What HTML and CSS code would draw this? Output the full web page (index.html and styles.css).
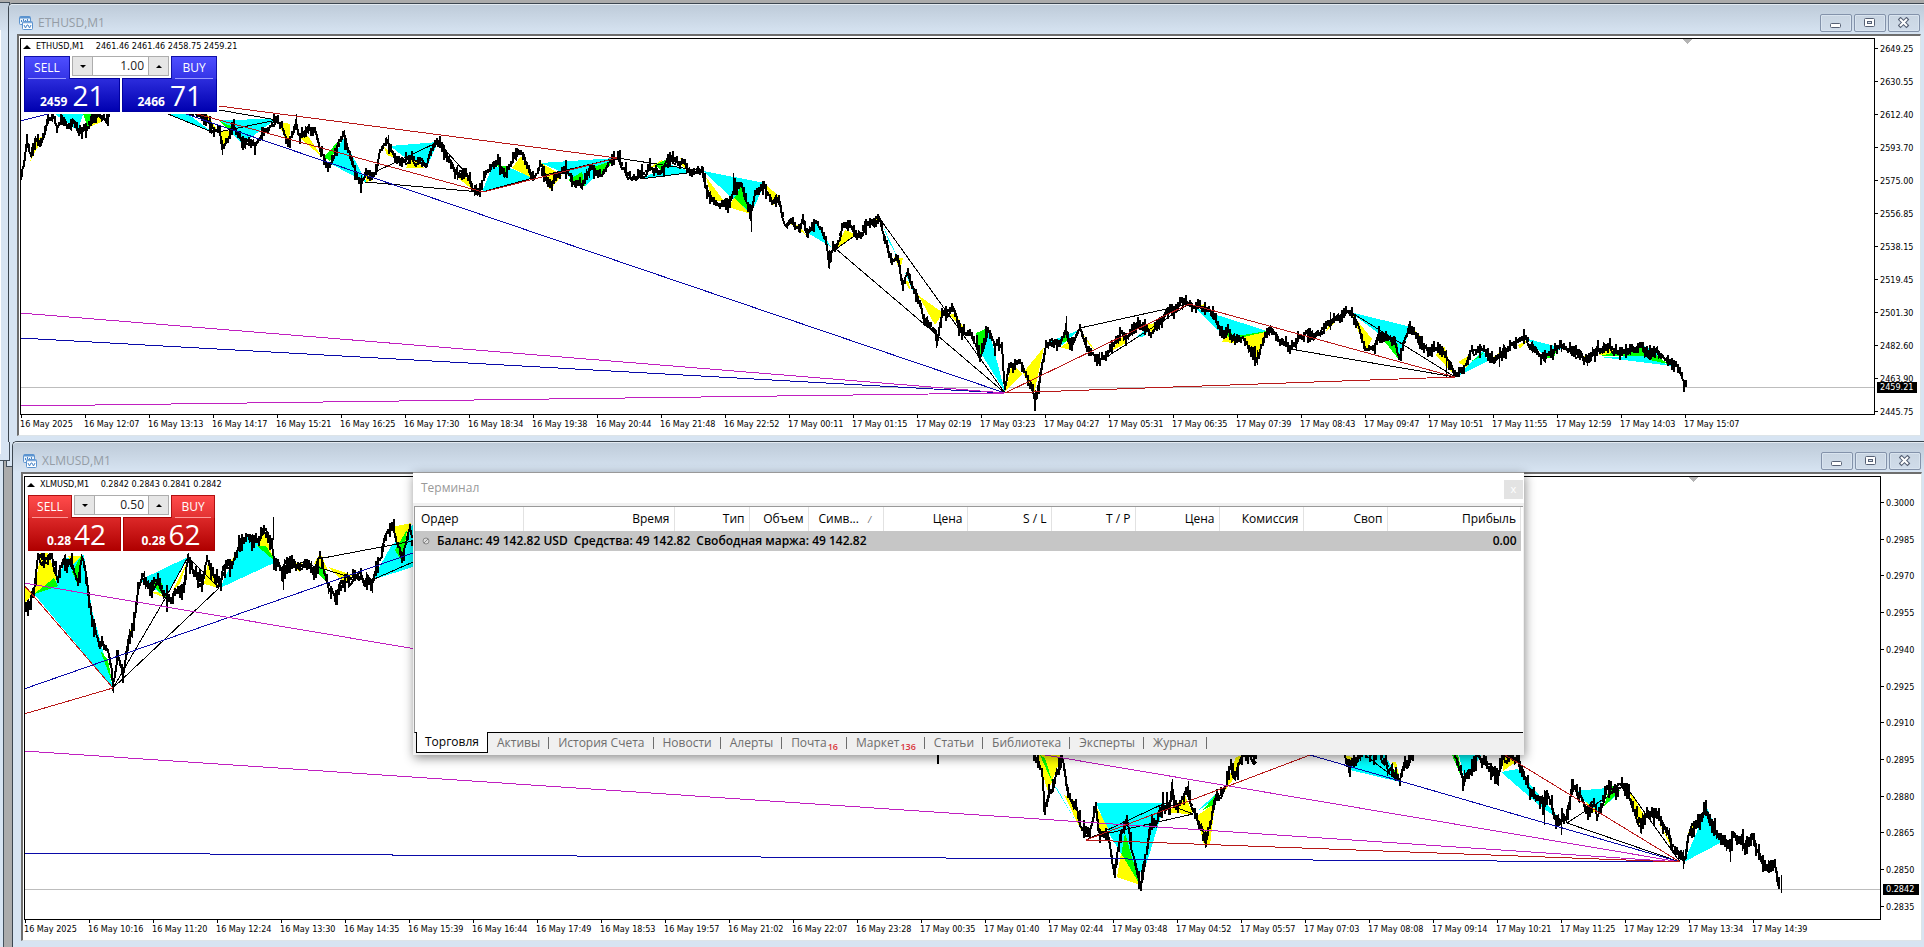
FILE: index.html
```
<!DOCTYPE html>
<html lang="ru">
<head>
<meta charset="utf-8">
<title>Терминал</title>
<link rel="stylesheet" href="styles.css">
</head>
<body>
<svg class="defs" aria-hidden="true">
  <symbol id="i-chart" viewBox="0 0 14 14">
    <rect x="0.5" y="0.5" width="11" height="8" rx="1" fill="#eaf3fc" stroke="#5b93cf"/>
    <path d="M1 1.5h10" stroke="#5b93cf" stroke-width="2"/>
    <path d="M2.500 6V4M4.500 5V3M6.500 6V4M8.500 5V3" stroke="#4a86c8"/>
    <rect x="3.500" y="5.500" width="10" height="8" rx="1" fill="#fff" stroke="#5b93cf"/>
    <path d="M4 6.500h9" stroke="#7eaadb" stroke-width="1.500"/>
    <path d="M5 9l1.500 3L8 9l1 0 1.500 3L12 9" fill="none" stroke="#4a86c8"/>
  </symbol>
  <symbol id="i-min" viewBox="0 0 12 12"><rect x="0.500" y="6.500" width="10" height="4" rx="1" fill="#fff" stroke="#566074"/></symbol>
  <symbol id="i-max" viewBox="0 0 12 12"><rect x="0.500" y="1.500" width="10" height="8" rx="1" fill="#fff" stroke="#566074"/><rect x="3.500" y="4.500" width="4" height="2" fill="#d5dfeb" stroke="#566074"/></symbol>
  <symbol id="i-close" viewBox="0 0 12 12"><path d="M2.500 2.500l6 6M8.500 2.500l-6 6" stroke="#566074" stroke-width="4" stroke-linecap="square"/><path d="M2 2l7 7M9 2l-7 7" stroke="#fff" stroke-width="2"/></symbol>
</svg>
<main class="desktop">
  <div class="back-low"></div>
  <div class="back-mid"></div>
  <div class="back-top"></div>

  <section class="window window-eth">
    <header class="titlebar">
      <svg class="app-icon"><use href="#i-chart"/></svg>
      <h2>ETHUSD,M1</h2>
      <div class="controls">
        <button aria-label="Свернуть"><svg><use href="#i-min"/></svg></button>
        <button aria-label="Развернуть"><svg><use href="#i-max"/></svg></button>
        <button aria-label="Закрыть"><svg><use href="#i-close"/></svg></button>
      </div>
    </header>
    <div class="client">
      <div class="plot">
        <svg class="chart" id="eth" viewBox="21 39 1853 375" preserveAspectRatio="none"></svg>
        <div class="overlay">
          <p class="quote"><span class="tri"></span><span class="sym">ETHUSD,M1</span> 2461.46 2461.46 2458.75 2459.21</p>
          <div class="trade blue">
            <div class="trade-top">
              <button class="side">SELL</button>
              <div class="lot"><button class="down" aria-label="Меньше"></button><input value="1.00" aria-label="Объем ETHUSD"><button class="up" aria-label="Больше"></button></div>
              <button class="side">BUY</button>
            </div>
            <div class="trade-bottom">
              <div class="price sell"><b>2459</b><span>21</span></div>
              <div class="price buy"><b>2466</b><span>71</span></div>
            </div>
          </div>
        </div>
      </div>
      <div class="axis">
        <span>2649.25</span><span>2630.55</span><span>2612.40</span><span>2593.70</span><span>2575.00</span><span>2556.85</span><span>2538.15</span><span>2519.45</span><span>2501.30</span><span>2482.60</span><span>2463.90</span><span>2445.75</span>
        <strong>2459.21</strong>
      </div>
      <div class="times">
        <span>16 May 2025</span><span>16 May 12:07</span><span>16 May 13:13</span><span>16 May 14:17</span><span>16 May 15:21</span><span>16 May 16:25</span><span>16 May 17:30</span><span>16 May 18:34</span><span>16 May 19:38</span><span>16 May 20:44</span><span>16 May 21:48</span><span>16 May 22:52</span><span>17 May 00:11</span><span>17 May 01:15</span><span>17 May 02:19</span><span>17 May 03:23</span><span>17 May 04:27</span><span>17 May 05:31</span><span>17 May 06:35</span><span>17 May 07:39</span><span>17 May 08:43</span><span>17 May 09:47</span><span>17 May 10:51</span><span>17 May 11:55</span><span>17 May 12:59</span><span>17 May 14:03</span><span>17 May 15:07</span>
      </div>
    </div>
  </section>

  <section class="window window-xlm">
    <header class="titlebar">
      <svg class="app-icon"><use href="#i-chart"/></svg>
      <h2>XLMUSD,M1</h2>
      <div class="controls">
        <button aria-label="Свернуть"><svg><use href="#i-min"/></svg></button>
        <button aria-label="Развернуть"><svg><use href="#i-max"/></svg></button>
        <button aria-label="Закрыть"><svg><use href="#i-close"/></svg></button>
      </div>
    </header>
    <div class="client">
      <div class="plot">
        <svg class="chart" id="xlm" viewBox="25 477 1855 442" preserveAspectRatio="none"></svg>
        <div class="overlay">
          <p class="quote"><span class="tri"></span><span class="sym">XLMUSD,M1</span> 0.2842 0.2843 0.2841 0.2842</p>
          <div class="trade red">
            <div class="trade-top">
              <button class="side">SELL</button>
              <div class="lot"><button class="down" aria-label="Меньше"></button><input value="0.50" aria-label="Объем XLMUSD"><button class="up" aria-label="Больше"></button></div>
              <button class="side">BUY</button>
            </div>
            <div class="trade-bottom">
              <div class="price sell"><b>0.28</b><span>42</span></div>
              <div class="price buy"><b>0.28</b><span>62</span></div>
            </div>
          </div>
        </div>
      </div>
      <div class="axis">
        <span>0.3000</span><span>0.2985</span><span>0.2970</span><span>0.2955</span><span>0.2940</span><span>0.2925</span><span>0.2910</span><span>0.2895</span><span>0.2880</span><span>0.2865</span><span>0.2850</span><span>0.2835</span>
        <strong>0.2842</strong>
      </div>
      <div class="times">
        <span>16 May 2025</span><span>16 May 10:16</span><span>16 May 11:20</span><span>16 May 12:24</span><span>16 May 13:30</span><span>16 May 14:35</span><span>16 May 15:39</span><span>16 May 16:44</span><span>16 May 17:49</span><span>16 May 18:53</span><span>16 May 19:57</span><span>16 May 21:02</span><span>16 May 22:07</span><span>16 May 23:28</span><span>17 May 00:35</span><span>17 May 01:40</span><span>17 May 02:44</span><span>17 May 03:48</span><span>17 May 04:52</span><span>17 May 05:57</span><span>17 May 07:03</span><span>17 May 08:08</span><span>17 May 09:14</span><span>17 May 10:21</span><span>17 May 11:25</span><span>17 May 12:29</span><span>17 May 13:34</span><span>17 May 14:39</span>
      </div>
    </div>
  </section>

  <section class="terminal">
    <header class="terminal-title">
      <h2>Терминал</h2>
      <button aria-label="Закрыть">x</button>
    </header>
    <div class="terminal-body">
      <table>
        <colgroup><col class="w108"><col class="w151"><col class="w76"><col class="w59"><col class="w76"><col class="w84"><col class="w84"><col class="w84"><col class="w84"><col class="w84"><col class="w84"><col></colgroup>
        <thead>
          <tr><th class="left">Ордер</th><th>Время</th><th>Тип</th><th>Объем</th><th class="left sorted">Симв... <i>/</i></th><th>Цена</th><th>S / L</th><th>T / P</th><th>Цена</th><th>Комиссия</th><th>Своп</th><th>Прибыль</th></tr>
        </thead>
        <tbody>
          <tr><td colspan="11"><div class="balance"><svg viewBox="0 0 8 8"><circle cx="4" cy="4" r="3" fill="#ddd" stroke="#888"/><path d="M2 6l4-4" stroke="#888"/></svg><span>Баланс: 49 142.82 USD</span><span>Средства: 49 142.82</span><span>Свободная маржа: 49 142.82</span></div></td><td class="profit">0.00</td></tr>
        </tbody>
      </table>
    </div>
    <nav class="tabs">
      <button class="active">Торговля</button><button>Активы</button><button>История Счета</button><button>Новости</button><button>Алерты</button><button>Почта<sub>16</sub></button><button>Маркет<sub>136</sub></button><button>Статьи</button><button>Библиотека</button><button>Эксперты</button><button>Журнал</button>
    </nav>
  </section>
</main>
<script src="charts.js"></script>
</body>
</html>
```
FILE: styles.css
```
* { box-sizing: border-box; }
body { margin: 0; font: 12px/16px "Open Sans", "Noto Sans", sans-serif; color: #000; }
h2, p { margin: 0; font-weight: normal; font-size: 12px; }
button, input { font: inherit; padding: 0; margin: 0; }
.defs { position: absolute; width: 0; height: 0; }
.desktop { position: relative; min-height: 100vh; overflow: hidden; background: #ababab; }

.back-low { position: absolute; left: 0; top: 440px; bottom: 0; width: 4px; background: #d7e4f2; border-right: 1px solid #44505c; }
.back-mid { position: absolute; left: 6px; top: 440px; height: 27px; width: 8px; background: #d7e4f2; border: 1px solid #44505c; border-top-color: #d7e4f2; }
.back-top { position: absolute; left: 0; top: 2px; height: 459px; width: 10px; background: linear-gradient(#c0ccd9, #d7e4f2 30px); border: 1px solid #44505c; border-left: 0; }
.back-top::before { content: ""; display: block; width: 1px; height: 424px; margin-top: 27px; background: #fff; }

.window { position: absolute; right: 0; display: flex; flex-direction: column; background: #d7e4f2; border-top: 1px solid #3c4650; border-left: 1px solid #3c4650; border-top-left-radius: 5px; padding: 0 3px 6px 8px; }
.window-eth { left: 8px; top: 3px; }
.window-xlm { left: 12px; top: 441px; padding-right: 2px; }
.titlebar { display: flex; align-items: center; height: 30px; margin: 0 -3px 0 -8px; padding: 7px 4px 0 10px; background: linear-gradient(#becbd9, #d7e4f2); border-top: 1px solid #e4ebf2; border-top-left-radius: 4px; }
.titlebar h2 { flex: 1; margin-left: 5px; color: #949ca5; }
.app-icon { width: 14px; height: 14px; }
.controls { display: flex; gap: 2px; }
.controls button { display: grid; place-items: center; width: 32px; height: 18px; border: 1px solid #8392aa; border-radius: 2px; background: linear-gradient(#c9d5e2, #d0dcea); box-shadow: inset 0 0 0 1px #d9e4ef; }
.controls svg { width: 12px; height: 12px; }

.client { display: grid; grid-template-columns: 1fr 45px; background: #fff; border: solid #6e6e6e; border-width: 2px 1px 1px 2px; border-right-color: #dde4e8; border-bottom-color: #dde4e8; padding: 2px 0 0 1px; font: 9px/12px "DejaVu Sans Condensed", "DejaVu Sans", "Noto Sans", sans-serif; }
.window-xlm .client { grid-template-columns: 1fr 40px; }
.plot { position: relative; border: 1px solid #000; height: 377px; overflow: hidden; }
.window-xlm .plot { height: 444px; }
.chart { display: block; width: 100%; height: 100%; }
.overlay { position: absolute; left: 2px; top: 1px; }
.quote { display: flex; align-items: center; font-size: 9px; line-height: 13px; white-space: pre; gap: 5px; }
.sym { margin-right: 4px; }
.tri { border: 4px solid transparent; border-top: 0; border-bottom: 4px solid #000; }

.axis { position: relative; display: flex; flex-direction: column; justify-content: space-between; height: 380px; padding: 5px 0 0; margin-bottom: -3px; }
.window-xlm .axis { height: 444px; margin-bottom: 0; padding: 21px 0 7px; }
.axis span::before { content: ""; display: inline-block; width: 3px; height: 1px; margin-right: 2px; vertical-align: 3px; background: #000; }
.axis strong { position: absolute; left: 2px; right: 3px; top: 344px; padding-left: 3px; line-height: 11px; font-weight: normal; color: #fff; background: #000; }
.window-xlm .axis strong { top: 408px; right: 2px; }
.times { grid-column: 1 / -1; display: flex; height: 20px; }
.times span { position: relative; flex: 0 0 64px; padding-top: 3px; white-space: nowrap; }
.times span::before { content: ""; position: absolute; left: 1px; top: 0; width: 1px; height: 3px; background: #000; }

.trade { width: 195px; background: #fff; padding: 2px 2px 2px 0; margin-top: 1px; margin-left: 1px; font: 12px/16px "Open Sans", "Noto Sans", sans-serif; }
.red { width: 189px; margin-top: 2px; }
.trade-top { display: flex; gap: 2px; }
.side { flex: none; position: relative; z-index: 1; width: 46px; height: 23px; margin-bottom: -1px; line-height: 20px; color: #fff; border: 1px solid; border-bottom: 0; }
.red .side { width: 44px; }
.lot { flex: 1; min-width: 0; display: flex; height: 20px; border: 1px solid #adadad; }
.lot input { flex: 1; min-width: 0; border: 0; border-left: 1px solid #adadad; border-right: 1px solid #adadad; text-align: right; padding-right: 4px; color: #222; outline: 0; }
.lot button { flex: none; display: grid; place-items: center; width: 19px; border: 0; background: #e6e6e6; }
.lot button::before { content: ""; border: 3px solid transparent; }
.lot .down::before { border-top-color: #000; border-bottom: 0; }
.lot .up::before { border-bottom-color: #000; border-top: 0; }
.trade-bottom { display: flex; gap: 2px; }
.price { position: relative; flex: 1; height: 34px; display: flex; align-items: baseline; gap: 5px; padding-left: 15px; color: #fff; border: 1px solid; }
.red .price { padding-left: 18px; gap: 3px; }
.price b { font-size: 12px; line-height: 32px; }
.price span { font-size: 28px; line-height: 32px; }
.price::before { content: ""; position: absolute; z-index: 2; top: -1px; left: 3px; width: 38px; height: 1px; background: #9a9aff; }
.price.buy::before { left: auto; right: 3px; }
.red .price::before { width: 36px; background: #ff9a9a; }
.blue .side { background: linear-gradient(#4e4eff, #3434e6); border-color: #1010a8; }
.blue .price { background: linear-gradient(#2c2cdc, #0000b0); border-color: #0000a0; }
.red .side { background: linear-gradient(#ff4a4a, #e23232); border-color: #b01010; }
.red .price { background: linear-gradient(#dc2828, #b00000); border-color: #a80000; }

.terminal { position: absolute; left: 413px; top: 472px; width: 1111px; display: flex; flex-direction: column; background: #f0f0f0; border-top: 1px solid #999; box-shadow: 1px 3px 10px rgba(0, 0, 0, .45); }
.terminal-title { display: flex; align-items: center; justify-content: space-between; height: 30px; padding: 0 1px 0 8px; background: #fff; }
.terminal-title h2 { color: #999; }
.terminal-title button { width: 19px; height: 19px; border: 0; background: #e3e3e3; color: #fff; font-size: 11px; line-height: 16px; margin-top: 2px; }
.terminal-body { height: 227px; margin: 3px 1px 0; background: #fff; border: solid #999; border-width: 1px 0 0 1px; border-bottom: 1px solid #000; padding-right: 2px; }
table { width: 100%; table-layout: fixed; border-collapse: collapse; }
.w108 { width: 108px; } .w151 { width: 151px; } .w76 { width: 75px; } .w59 { width: 59px; } .w84 { width: 84px; }
th { height: 24px; padding: 0 4px; font-weight: normal; text-align: right; border-right: 1px solid #e2e2e2; white-space: nowrap; }
th.left { text-align: left; padding-left: 6px; }
th.sorted { padding-left: 10px; }
.sorted i { margin-left: 6px; font-size: 9px; color: #666; }
tbody tr { background: #c6c6c6; }
td { height: 20px; padding: 0 4px; font-weight: 600; }
.balance { display: flex; align-items: center; gap: 6px; padding-left: 3px; }
.balance svg { width: 8px; height: 8px; margin-right: 1px; }
.profit { text-align: right; }
.tabs { display: flex; height: 22px; padding-left: 3px; }
.tabs button { position: relative; height: 20px; padding: 0 9px; border: 0; background: none; color: #6d6d6d; white-space: nowrap; }
.tabs button:not(.active)::after { content: ""; position: absolute; right: 0; top: 4px; width: 1px; height: 12px; background: #6d6d6d; }
.tabs .active { margin-top: -1px; height: 21px; padding: 0 8px; color: #000; background: #fff; border: 1px solid #000; border-top: 0; }
.tabs sub { margin-left: 1px; font-size: 9px; line-height: 8px; font-weight: 600; color: #d8343a; vertical-align: -3px; }
```
FILE: charts.js
```
const CYAN = "#00ffff", YELLOW = "#ffff00", GREEN = "#00ff00";
const BLUE = "#0a0aa8", RED = "#b81818", MAGENTA = "#c020c0", BLACK = "#000";

const eth = {
  id: "eth", level: 387, marker: [1687, 39], noise: 5,
  shapes: [
    [CYAN, "55,114 83,114 78,131"], [GREEN, "83,114 100,114 88,128"], [YELLOW, "88,128 103,121 96,115"],
    [YELLOW, "30,162 37,140 44,135"], [CYAN, "168,114 188,114 212,132"],
    [YELLOW, "198,114 207,114 218,131"], [CYAN, "218,120 276,119 242,144"], [GREEN, "218,120 237,129 230,131"], [YELLOW, "219,131 232,131 223,145"],
    [YELLOW, "277,121 290,124 289,146"], [YELLOW, "299,137 308,136 322,157"],
    [GREEN, "324,157 343,136 330,161"], [CYAN, "331,164 343,138 367,183"], [YELLOW, "365,172 374,180 366,182"],
    [CYAN, "390,146 438,142 427,167 403,156"], [YELLOW, "406,168 425,168 410,157"], [YELLOW, "384,147 400,160 387,155"],
    [YELLOW, "441,145 455,167 446,157"], [YELLOW, "458,178 465,176 477,193"],
    [CYAN, "482,192 492,167 508,167 533,178"], [YELLOW, "512,168 521,156 532,178"], [GREEN, "497,165 509,167 505,176"],
    [CYAN, "541,163 615,158 585,186 562,172"], [YELLOW, "541,163 562,175 550,190"], [GREEN, "568,180 582,172 585,186"], [GREEN, "590,168 614,160 600,178"],
    [YELLOW, "650,167 662,160 665,167"], [GREEN, "655,165 671,157 664,173"], [CYAN, "640,179 692,172 672,165"], [YELLOW, "680,157 691,172 682,166"],
    [CYAN, "703,171 765,183 751,214 734,200"], [YELLOW, "706,177 724,201 712,201"], [YELLOW, "728,207 734,198 751,214"], [GREEN, "734,198 742,185 751,213"],
    [YELLOW, "766,185 779,196 773,206"], [YELLOW, "788,222 806,235 800,226"], [CYAN, "808,233 816,222 831,247"], [YELLOW, "836,249 845,230 857,235"],
    [YELLOW, "870,220 880,219 872,226"], [CYAN, "883,226 898,258 889,242"], [YELLOW, "894,257 900,270 903,258"], [CYAN, "904,270 914,294 910,280"], [YELLOW, "904,280 910,290 909,282"],
    [YELLOW, "918,295 943,313 935,325"], [YELLOW, "949,315 955,313 966,332"], [GREEN, "976,333 988,328 980,358"], [CYAN, "982,355 989,331 1005,392"],
    [YELLOW, "1005,392 1012,363 1022,374"], [YELLOW, "1023,373 1044,347 1034,394"], [CYAN, "1048,342 1079,330 1062,345"], [GREEN, "1056,344 1066,335 1068,341"], [YELLOW, "1060,348 1069,341 1069,349"],
    [YELLOW, "1083,334 1095,350 1089,345"], [YELLOW, "1110,352 1122,337 1128,342"], [CYAN, "1135,338 1150,326 1145,336"], [YELLOW, "1145,325 1160,322 1152,333"], [YELLOW, "1193,306 1206,304 1205,310"],
    [CYAN, "1195,308 1267,331 1235,342 1218,330"], [YELLOW, "1222,342 1228,328 1236,343"], [GREEN, "1226,335 1229,328 1235,341"], [GREEN, "1237,336 1267,331 1258,342"], [YELLOW, "1244,337 1265,332 1257,361"],
    [YELLOW, "1326,331 1332,320 1336,322"], [CYAN, "1350,312 1411,327 1399,358 1378,333"], [YELLOW, "1352,314 1372,339 1366,352"], [GREEN, "1382,338 1398,344 1399,360"],
    [YELLOW, "1411,327 1422,337 1418,342"], [YELLOW, "1436,355 1444,346 1454,375"], [YELLOW, "1458,362 1470,355 1468,369"], [CYAN, "1456,377 1472,362 1483,350 1488,361"], [GREEN, "1470,362 1486,351 1478,358"],
    [YELLOW, "1490,360 1500,352 1499,359"], [YELLOW, "1518,345 1528,340 1520,349"], [CYAN, "1528,339 1562,348 1544,356"], [GREEN, "1542,359 1557,350 1554,357"], [YELLOW, "1575,352 1586,357 1580,358"],
    [YELLOW, "1598,355 1612,347 1618,354"], [GREEN, "1600,356 1641,346 1650,356"], [CYAN, "1600,357 1645,356 1672,366"], [CYAN, "1641,345 1660,352 1655,360"], [GREEN, "1650,350 1668,364 1650,360"]
  ],
  price: [[20,184,24,165,27,140,31,155,36,139,41,144,48,122,53,114,57,128,62,117,67,126,75,122,80,131,87,128,92,118,100,114,105,120,108,118,112,100,165,95,200,114,208,122,214,130,220,132,222,148,228,140,234,127,243,143,256,145,262,135,276,120,282,126,288,146,296,122,300,138,309,128,315,130,322,155,328,168,335,155,343,135,348,150,353,165,361,185,366,170,370,178,377,170,380,150,387,140,391,150,400,163,410,158,418,162,427,165,431,150,438,142,447,155,458,176,466,172,474,190,480,190,486,172,492,165,498,162,505,175,514,156,521,153,527,166,534,179,540,165,550,187,558,175,567,170,572,182,583,184,590,168,602,176,610,162,618,157,624,168,632,180,640,176,650,168,662,172,671,157,678,163,683,160,690,172,703,172,708,195,720,207,730,203,735,187,742,184,751,213,755,193,764,184,772,203,779,198,785,225,793,222,800,232,803,218,808,234,816,221,822,230,826,240,829,265,833,248,836,248,842,228,850,225,857,238,866,226,880,219,885,240,892,262,898,257,903,285,908,270,912,285,918,300,925,320,935,330,937,345,942,315,953,308,960,330,970,335,977,345,980,358,988,330,995,345,1002,345,1005,388,1009,365,1020,363,1028,380,1033,390,1035,402,1040,380,1046,345,1055,342,1060,346,1066,328,1070,345,1080,329,1087,348,1100,360,1110,350,1122,332,1128,338,1134,327,1143,326,1151,334,1160,322,1168,310,1178,308,1182,300,1188,305,1205,307,1214,315,1222,337,1228,330,1235,342,1243,337,1257,359,1265,335,1272,329,1280,342,1290,348,1300,338,1306,333,1320,335,1328,325,1336,318,1348,311,1358,325,1365,350,1375,345,1380,335,1395,340,1399,358,1410,328,1418,340,1430,350,1440,348,1445,355,1455,375,1462,370,1466,365,1472,350,1484,350,1492,360,1500,355,1510,345,1526,338,1533,350,1543,358,1560,345,1570,350,1587,360,1598,350,1610,347,1620,353,1641,346,1648,356,1655,350,1668,362,1678,367,1682,378,1687,387]],
  wicks: [[222,155,140],[296,114,130],[361,190,175],[344,130,140],[388,135,150],[474,196,185],[733,173,190],[751,232,205],[829,269,250],[936,348,330],[1035,406,390],[1066,316,335],[1182,297,310],[1257,365,350],[1330,312,330],[1446,378,350],[1499,367,350],[1561,340,352],[1587,366,355]],
  lines: [
    [BLACK, 219,110,277,120], [BLACK, 168,114,212,132], [BLACK, 218,132,277,120], [BLACK, 365,182,480,192], [BLACK, 375,172,438,142], [BLACK, 438,142,465,172],
    [BLACK, 482,192,533,178], [BLACK, 541,176,617,158], [BLACK, 617,158,703,171], [BLACK, 640,179,703,171], [BLACK, 836,249,1005,393], [BLACK, 880,219,1005,393],
    [BLACK, 836,249,857,234], [BLACK, 1080,328,1189,304], [BLACK, 1105,358,1189,304], [BLACK, 1290,349,1455,377], [BLACK, 1349,311,1455,377],
    [BLUE, 20,121,48,114], [BLUE, 183,113,1005,393], [BLUE, 20,338,1005,393], [MAGENTA, 20,313,1005,393], [MAGENTA, 20,406,1005,393],
    [RED, 219,106,617,158], [RED, 197,114,483,192], [RED, 483,192,617,158], [RED, 1005,393,1189,304], [RED, 1189,304,1455,377], [RED, 1005,393,1455,377]
  ]
};

const xlm = {
  id: "xlm", level: 889, marker: [1693, 477], noise: 7,
  shapes: [
    [CYAN, "34,594 60,573 66,558 84,555 92,610 113,688"], [YELLOW, "34,594 41,550 48,552 57,580"], [GREEN, "34,594 54,578 58,586"], [GREEN, "72,572 81,556 78,585"], [YELLOW, "68,556 81,556 73,565"],
    [YELLOW, "24,585 33,594 24,604"], [GREEN, "100,650 108,660 112,682"], [YELLOW, "124,668 136,610 130,632"], [CYAN, "140,580 188,557 166,597 153,588"], [GREEN, "152,585 160,578 166,598"], [YELLOW, "150,592 166,598 158,592"], [YELLOW, "172,592 188,560 180,583"],
    [YELLOW, "204,584 208,562 219,588"], [YELLOW, "230,563 240,546 234,562"], [CYAN, "220,588 240,545 250,534 276,562"], [YELLOW, "257,546 264,530 274,560"], [GREEN, "257,546 266,546 276,562"],
    [YELLOW, "290,563 302,563 300,572"], [GREEN, "312,568 324,564 328,583"], [YELLOW, "314,564 320,553 328,570"], [YELLOW, "328,567 352,575 345,584"], [CYAN, "372,580 390,548 413,524 413,567"], [YELLOW, "391,527 411,523 402,552"], [GREEN, "395,550 407,530 402,562"],
    [YELLOW, "1037,755 1062,755 1048,792"], [GREEN, "1040,755 1045,758 1053,784"], [CYAN, "1054,785 1058,790 1084,836 1072,815"], [YELLOW, "1064,795 1074,800 1082,832"],
    [CYAN, "1096,803 1165,803 1147,862 1141,872 1128,866 1110,835"], [YELLOW, "1096,806 1109,830 1100,832"], [GREEN, "1125,833 1140,885 1121,856"], [YELLOW, "1121,853 1140,885 1117,877"], [YELLOW, "1168,813 1185,795 1193,814"],
    [CYAN, "1196,812 1218,792 1214,800"], [GREEN, "1203,810 1218,792 1214,805"], [YELLOW, "1197,816 1215,803 1210,845 1204,845"], [YELLOW, "1224,792 1236,757 1244,755 1235,777"],
    [YELLOW, "1344,755 1352,757 1350,770"], [CYAN, "1350,770 1360,755 1385,755 1400,782"], [YELLOW, "1392,762 1396,762 1400,780"], [GREEN, "1391,776 1396,768 1400,782"], [GREEN, "1452,755 1458,755 1464,783"], [CYAN, "1459,755 1481,755 1465,782"],
    [YELLOW, "1502,755 1516,762 1503,771"], [CYAN, "1501,772 1518,769 1543,800 1564,823 1540,806"], [CYAN, "1576,791 1607,788 1598,811 1588,805"], [YELLOW, "1586,802 1598,811 1592,812"], [GREEN, "1604,806 1610,785 1620,790"], [CYAN, "1606,806 1624,786 1612,798"],
    [YELLOW, "1629,790 1646,818 1638,825"], [YELLOW, "1658,822 1668,838 1678,860"], [YELLOW, "1688,833 1703,811 1693,835"], [CYAN, "1684,862 1707,808 1722,842"]
  ],
  price: [
    [24,610,29,608,34,592,38,555,44,560,52,555,58,582,63,562,72,563,78,583,82,557,87,580,92,620,98,640,108,650,113,684,118,655,123,675,128,645,134,620,138,590,142,577,150,588,158,578,165,595,171,602,176,592,184,590,188,559,196,575,203,583,207,560,219,586,226,565,233,562,240,545,248,535,257,540,264,530,272,545,274,560,283,573,288,560,298,568,305,563,314,570,320,557,327,580,335,597,343,585,355,575,372,585,380,560,388,530,394,530,402,560,410,527,413,550],
    [1034,755,1042,770,1045,805,1055,780,1062,755,1068,795,1076,805,1082,828,1090,830,1096,806,1100,835,1108,835,1115,873,1122,830,1127,820,1133,855,1141,884,1150,830,1158,818,1163,806,1170,808,1172,785,1176,808,1188,787,1193,810,1197,818,1206,844,1215,800,1223,793,1231,767,1236,775,1242,755,1257,757],
    [1345,755,1350,768,1358,755,1366,750,1380,752,1390,770,1400,780,1405,765,1414,755],
    [1455,757,1463,780,1472,770,1478,755,1487,765,1498,778,1503,755,1517,759,1520,770,1530,790,1543,803,1548,795,1556,820,1566,820,1573,785,1580,795,1588,812,1594,802,1597,818,1607,788,1616,790,1625,785,1635,810,1641,826,1648,812,1657,814,1665,828,1679,858,1684,860,1690,832,1700,820,1706,810,1715,830,1728,846,1735,835,1745,845,1752,835,1757,850,1765,868,1775,865,1780,886]
  ],
  wicks: [[113,693,680],[188,553,562],[273,517,540],[283,590,570],[335,605,590],[372,593,580],[937,755,764],[938,755,764],[1043,812,790],[1115,878,860],[1141,889,870],[1172,779,800],[1188,781,800],[1205,848,830],[1464,786,770],[1498,786,770],[1544,825,790],[1561,835,810],[1573,779,790],[1641,834,820],[1683,869,850],[1706,803,815],[1730,862,845],[1781,893,875]],
  lines: [
    [BLACK, 113,688,166,597], [BLACK, 166,597,188,557], [BLACK, 113,688,219,588], [BLACK, 188,557,219,588], [BLACK, 318,559,413,541], [BLACK, 300,562,360,580], [BLACK, 372,580,413,562],
    [BLACK, 1086,840,1165,803], [BLACK, 1105,834,1193,814], [BLACK, 1165,803,1193,814], [BLACK, 1567,823,1680,862], [BLACK, 1567,823,1625,785], [BLACK, 1625,785,1680,862], [BLACK, 1365,755,1400,782],
    [BLUE, 24,689,413,553], [BLUE, 24,853,1680,862], [BLUE, 1310,755,1680,862], [MAGENTA, 24,583,1680,862], [MAGENTA, 24,751,1680,862],
    [RED, 24,585,113,688], [RED, 24,714,113,688], [RED, 1086,840,1310,755], [RED, 1086,840,1680,862], [RED, 1505,755,1680,862]
  ]
};

function random(seed) {
  let s = seed;
  return () => ((s = (s * 16807) % 2147483647) / 2147483647);
}

function pricePath(points, noise, next) {
  let thick = "", thin = "";
  for (let i = 0; i + 3 < points.length; i += 2) {
    const [x0, y0, x1, y1] = points.slice(i, i + 4);
    thick += (i ? "L" : "M") + x0 + " " + y0;
    for (let x = x0 + 2; x < x1; x += 2) {
      const y = y0 + (y1 - y0) * (x - x0) / (x1 - x0);
      thick += "L" + x + " " + Math.round(y + (next() - 0.5) * noise * 2);
    }
    for (let x = x0; x < x1; x += 2) {
      const y = y0 + (y1 - y0) * (x - x0) / (x1 - x0);
      const up = next() * next() * noise * 2, down = next() * next() * noise * 2;
      thin += "M" + x + " " + Math.round(y - up - 1) + "V" + Math.round(y + down + 1);
    }
  }
  return `<path d="${thick}" fill="none" stroke="#000" stroke-width="2"/><path d="${thin}" stroke="#000" stroke-width="2"/>`;
}

function draw(c) {
  const next = random(c.level * 31);
  const [mx, my] = c.marker;
  let s = `<path d="M0 ${c.level + 0.5}H1900" stroke="#bdbdbd"/><path d="M${mx - 5} ${my}h10l-5 5z" fill="#b4b4b4"/>`;
  s += c.shapes.map(([f, p]) => `<polygon fill="${f}" points="${p}"/>`).join("");
  s += c.price.map(p => pricePath(p, c.noise, next)).join("");
  s += c.wicks.map(([x, a, b]) => `<path d="M${x + 0.5} ${a}V${b}" stroke="#000"/>`).join("");
  s += c.lines.map(([k, a, b, x, y]) => `<path d="M${a} ${b}L${x} ${y}" stroke="${k}"/>`).join("");
  document.getElementById(c.id).innerHTML = `<g shape-rendering="crispEdges">${s}</g>`;
}

draw(eth);
draw(xlm);
```
